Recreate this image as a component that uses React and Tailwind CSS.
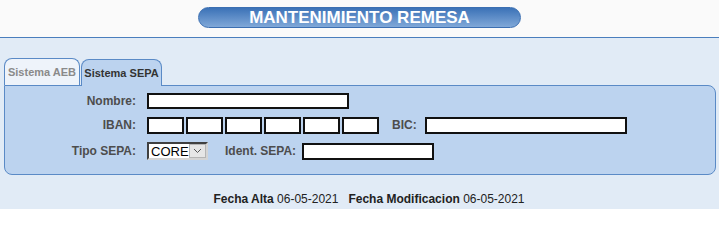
import React from 'react';

const Label = ({ children, className = '' }) => (
    <span className={`text-[12px] font-bold text-[#4d4d4d] ${className}`}>{children}</span>
);

const Box = ({ className = '' }) => (
    <div className={`bg-white border-2 border-[#111] ${className}`}></div>
);

const App = () => {
    const iban = [0, 1, 2, 3, 4, 5];
    return (
        <div className="w-[719px] h-[209px] overflow-hidden bg-[#e1ebf6]" style={{ fontFamily: '"Liberation Sans", Arial, sans-serif' }}>
            <div className="h-[38px] bg-[#fafafa] border-b-[1.5px] border-[#4a7ebd] flex justify-center pt-[7px]">
                <div className="w-[323px] h-[21px] rounded-full border border-[#3b6fb2] bg-gradient-to-b from-[#3b72b7] to-[#80a8d8] flex items-center justify-center">
                    <span className="text-white text-[17px] font-bold leading-none">MANTENIMIENTO REMESA</span>
                </div>
            </div>

            <div className="pt-[20px] pl-[4px] pr-[3px]">
                <div className="flex items-end gap-[1px] h-[27px]">
                    <div className="h-[27px] w-[76px] rounded-t-[8px] border border-b-0 border-[#5a8ac6] bg-[#eef3fa] flex items-center justify-center">
                        <span className="text-[11px] font-bold text-[#8a8a8a]">Sistema AEB</span>
                    </div>
                    <div className="h-[27px] w-[81px] rounded-t-[8px] border border-b-0 border-[#5a8ac6] bg-[#bcd3ef] flex items-center justify-center relative top-[1px]">
                        <span className="text-[11px] font-bold text-[#333]">Sistema SEPA</span>
                    </div>
                </div>
                <div className="h-[90px] bg-[#bcd3ef] border border-[#5a8ac6] rounded-b-[8px] rounded-tr-[8px] pt-[7px] flex flex-col gap-[8px]">
                    <div className="flex items-center h-[16px]">
                        <Label className="w-[131px] text-right">Nombre:</Label>
                        <Box className="ml-[11px] w-[202px] h-[16px]" />
                    </div>
                    <div className="flex items-center h-[16px]">
                        <Label className="w-[131px] text-right">IBAN:</Label>
                        <div className="ml-[11px] flex gap-[2px]">
                            {iban.map(i => (
                                <Box key={i} className="w-[37px] h-[17px]" />
                            ))}
                        </div>
                        <Label className="ml-[13px]">BIC:</Label>
                        <Box className="ml-[8px] w-[202px] h-[17px]" />
                    </div>
                    <div className="flex items-center h-[18px] mt-[1px]">
                        <Label className="w-[131px] text-right">Tipo SEPA:</Label>
                        <div className="ml-[11px] w-[61px] h-[18px] border-2 border-t-[#404040] border-l-[#404040] border-r-[#d4d4d4] border-b-[#d4d4d4] bg-white flex items-center">
                            <span className="text-[13px] text-black pl-[2px] leading-none flex-1">CORE</span>
                            <div className="w-[17px] h-full bg-[#e6e6e6] border border-[#b5b5b5] flex items-center justify-center">
                                <svg width="9" height="6" viewBox="0 0 9 6"><path d="M1 1 L4.5 4.5 L8 1" fill="none" stroke="#555" strokeWidth="1" /></svg>
                            </div>
                        </div>
                        <Label className="ml-[17px]">Ident. SEPA:</Label>
                        <Box className="ml-[6px] w-[132px] h-[17px]" />
                    </div>
                </div>
                <div className="mt-[17px] pl-[18px] text-center text-[12px] leading-[14px] text-[#222] whitespace-pre">
                    <span className="font-bold">Fecha Alta</span> 06-05-2021   <span className="font-bold">Fecha Modificacion</span> 06-05-2021
                </div>
            </div>
        </div>
    );
};

export default App;
